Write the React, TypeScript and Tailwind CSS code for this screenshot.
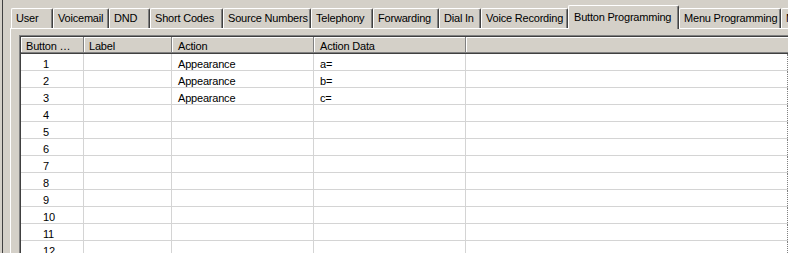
import React from "react";

type Tab = { label: string; w: string; active?: boolean };

const tabs: Tab[] = [
  { label: "User", w: "w-[42px]" },
  { label: "Voicemail", w: "w-[56px]" },
  { label: "DND", w: "w-[41px]" },
  { label: "Short Codes", w: "w-[73px]" },
  { label: "Source Numbers", w: "w-[88px]" },
  { label: "Telephony", w: "w-[62px]" },
  { label: "Forwarding", w: "w-[66px]" },
  { label: "Dial In", w: "w-[42px]" },
  { label: "Voice Recording", w: "w-[87px]" },
  { label: "Button Programming", w: "w-[111px]", active: true },
  { label: "Menu Programming", w: "w-[102px]" },
  { label: "Mobility", w: "w-[80px]" },
];

const rows: { n: number; label: string; action: string; data: string }[] = [
  { n: 1, label: "", action: "Appearance", data: "a=" },
  { n: 2, label: "", action: "Appearance", data: "b=" },
  { n: 3, label: "", action: "Appearance", data: "c=" },
  { n: 4, label: "", action: "", data: "" },
  { n: 5, label: "", action: "", data: "" },
  { n: 6, label: "", action: "", data: "" },
  { n: 7, label: "", action: "", data: "" },
  { n: 8, label: "", action: "", data: "" },
  { n: 9, label: "", action: "", data: "" },
  { n: 10, label: "", action: "", data: "" },
  { n: 11, label: "", action: "", data: "" },
  { n: 12, label: "", action: "", data: "" },
];

function TabItem({ tab }: { tab: Tab }) {
  if (tab.active) {
    return (
      <div
        className={`${tab.w} flex-none h-[24px] -mb-px relative z-10 bg-[#d4d0c8] border-t border-l border-r border-t-white border-l-white border-r-[#404040] rounded-t-[2px] shadow-[inset_-1px_0_0_#808080] pl-[5px] pt-[5px] leading-[12px] whitespace-nowrap overflow-hidden`}
      >
        {tab.label}
      </div>
    );
  }
  return (
    <div
      className={`${tab.w} flex-none h-[20px] border-t border-l border-r border-t-white border-l-white border-r-[#404040] rounded-t-[2px] shadow-[inset_-1px_0_0_#808080] pl-[4px] pt-[3px] leading-[12px] whitespace-nowrap overflow-hidden`}
    >
      {tab.label}
    </div>
  );
}

export default function App() {
  return (
    <div className="w-[788px] h-[253px] overflow-hidden bg-[#d4d0c8] flex text-[11px] tracking-[-0.2px] text-black font-['Liberation_Sans',Arial,sans-serif]">
      <div className="w-[2px] flex-none" />
      <div className="w-px flex-none bg-[#404040]" />
      <div className="flex-1 min-w-0 pl-[7px] flex flex-col">
        <div className="h-[28px] flex items-end pl-px flex-none">
          {tabs.map((t) => (
            <TabItem key={t.label} tab={t} />
          ))}
        </div>
        <div className="flex-1 border-t border-l border-white pl-[8px] pt-[6px] min-w-0">
          <div className="w-[769px] border-t border-l border-[#808080] bg-white">
            <div className="border-t border-l border-[#404040]">
              <div className="flex h-[15px] bg-[#d4d0c8]">
                <div className="w-[63px] flex-none border-r border-[#808080] shadow-[inset_1px_1px_0_#fff] pl-[5px] pt-[3px] leading-[12px] whitespace-nowrap overflow-hidden">
                  Button …
                </div>
                <div className="w-[88px] flex-none border-r border-[#808080] shadow-[inset_1px_1px_0_#fff] pl-[5px] pt-[3px] leading-[12px] whitespace-nowrap">
                  Label
                </div>
                <div className="w-[142px] flex-none border-r border-[#808080] shadow-[inset_1px_1px_0_#fff] pl-[6px] pt-[3px] leading-[12px] whitespace-nowrap">
                  Action
                </div>
                <div className="w-[152px] flex-none border-r border-[#808080] shadow-[inset_1px_1px_0_#fff] pl-[6px] pt-[3px] leading-[12px] whitespace-nowrap">
                  Action Data
                </div>
                <div className="flex-1 shadow-[inset_1px_1px_0_#fff]" />
              </div>
              <div className="h-px bg-[#808080]" />
              <div className="h-px bg-[#404040]" />
              {rows.map((r) => (
                <div key={r.n} className="flex h-[17px] border-b border-[#d4d4d4]">
                  <div className="w-[63px] flex-none border-r border-[#d4d4d4] pl-[22px] pt-[4px] leading-[12px]">
                    {r.n}
                  </div>
                  <div className="w-[88px] flex-none border-r border-[#d4d4d4] pl-[5px] pt-[4px] leading-[12px]">
                    {r.label}
                  </div>
                  <div className="w-[142px] flex-none border-r border-[#d4d4d4] pl-[6px] pt-[4px] leading-[12px] whitespace-nowrap">
                    {r.action}
                  </div>
                  <div className="w-[152px] flex-none border-r border-[#d4d4d4] pl-[6px] pt-[4px] leading-[12px] whitespace-nowrap">
                    {r.data}
                  </div>
                  <div className="flex-1 border-r border-dotted border-r-[#808080]" />
                </div>
              ))}
            </div>
          </div>
        </div>
      </div>
    </div>
  );
}
